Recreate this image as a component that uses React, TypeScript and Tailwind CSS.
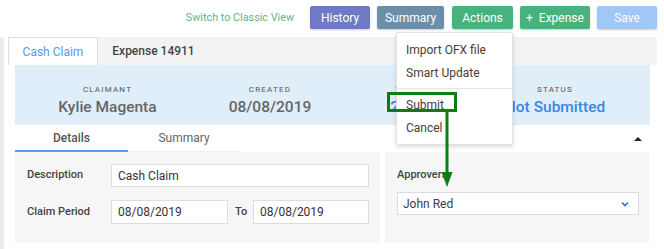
import React from "react";

function HeaderItem({
  label,
  value,
  valueClass,
}: {
  label: string;
  value: string;
  valueClass: string;
}) {
  return (
    <div className="flex flex-col items-center">
      <div className="text-[8px] tracking-[1.2px] text-[#555] leading-[10px]">{label}</div>
      <div className={`text-[15.5px] font-medium leading-[22px] mt-[1px] ${valueClass}`}>{value}</div>
    </div>
  );
}

function Button({ label, className }: { label: string; className: string }) {
  return (
    <button
      className={`h-[23px] rounded-[2px] text-white text-[12px] shadow-[0_1px_2px_rgba(0,0,0,0.2)] ${className}`}
    >
      {label}
    </button>
  );
}

export default function App() {
  return (
    <div
      className="relative w-[664px] h-[249px] overflow-hidden bg-white"
      style={{ fontFamily: "Roboto, 'Liberation Sans', sans-serif" }}
    >
      {/* top bar */}
      <div className="h-[37px] flex items-start justify-end pt-[6px] pr-[7px]">
        <span className="text-[10.8px] text-[#5cb883] mr-[16px] leading-[23px]">
          Switch to Classic View
        </span>
        <div className="flex gap-[7px]">
          <Button label="History" className="w-[60px] bg-[#7079c4]" />
          <Button label="Summary" className="w-[67px] bg-[#6b8fa9]" />
          <Button label="Actions" className="w-[61px] bg-[#48b27d] ml-[1px]" />
          <Button label="+  Expense" className="w-[70px] bg-[#48b27d] whitespace-pre" />
          <Button label="Save" className="w-[60px] bg-[#a0c7f5]" />
        </div>
      </div>

      <div className="flex h-[212px]">
        <div className="w-[4px] bg-[#ececec]" />
        <div className="ml-[4px] w-[649px]">
          {/* tabs */}
          <div className="h-[28px] bg-[#f3f3f3] flex items-end">
            <div className="w-[90px] h-[28px] bg-white border border-[#ddd] border-b-0 flex items-center justify-center text-[12px] text-[#5b96ec]">
              Cash Claim
            </div>
            <div className="w-[111px] flex items-center justify-center h-[28px] text-[12px] font-medium text-[#444]">
              Expense 14911
            </div>
          </div>

          <div className="px-[7px]">
            {/* summary header */}
            <div className="h-[60px] bg-[#dfeef9] grid grid-cols-[185px_140px_140px_150px] pt-[20px]">
              <HeaderItem label="CLAIMANT" value="Kylie Magenta" valueClass="text-[#666]" />
              <HeaderItem label="CREATED" value="08/08/2019" valueClass="text-[#666]" />
              <HeaderItem label="TOTAL" value="20.00" valueClass="text-[#3d7fd6]" />
              <HeaderItem label="STATUS" value="Not Submitted" valueClass="text-[#3d86e6]" />
            </div>

            {/* sub tabs */}
            <div className="h-[27px] flex items-end justify-between">
              <div className="flex">
                <div className="w-[113px] h-[27px] border-b-[2px] border-[#5b9be8] flex items-center justify-center text-[12px] font-medium text-[#555]">
                  Details
                </div>
                <div className="w-[112px] h-[27px] border-b border-[#eee] flex items-center justify-center text-[12px] text-[#666]">
                  Summary
                </div>
              </div>
              <div className="self-center mr-[8px] w-0 h-0 border-l-[4px] border-r-[4px] border-b-[4px] border-l-transparent border-r-transparent border-b-[#222]" />
            </div>

            {/* panels */}
            <div className="flex gap-[5px] h-[91px]">
              <div className="w-[365px] bg-[#f6f6f6] pl-[12px] pt-[12px]">
                <div className="flex items-center h-[23px]">
                  <div className="w-[84px] text-[11px] font-medium text-[#444]">Description</div>
                  <div className="w-[258px] h-[23px] bg-white border border-[#ddd] flex items-center pl-[6px] text-[12px] text-[#333]">
                    Cash Claim
                  </div>
                </div>
                <div className="flex items-center h-[24px] mt-[13px]">
                  <div className="w-[84px] text-[11px] font-medium text-[#444]">Claim Period</div>
                  <div className="w-[117px] h-[24px] bg-white border border-[#ddd] flex items-center pl-[6px] text-[12px] text-[#333]">
                    08/08/2019
                  </div>
                  <div className="w-[25px] pl-[7px] text-[11px] font-medium text-[#444]">To</div>
                  <div className="w-[116px] h-[24px] bg-white border border-[#ddd] flex items-center pl-[6px] text-[12px] text-[#333]">
                    08/08/2019
                  </div>
                </div>
              </div>
              <div className="w-[264px] bg-[#f6f6f6] pl-[12px] pt-[16px]">
                <div className="text-[11px] font-medium text-[#444] leading-[14px]">Approvers</div>
                <div className="mt-[10px] w-[242px] h-[23px] bg-white border border-[#ddd] flex items-center justify-between pl-[5px] pr-[9px] text-[12px] text-[#3c3c58]">
                  John Red
                  <svg width="8" height="6" viewBox="0 0 8 6">
                    <path d="M1 1.5 L4 4.5 L7 1.5" fill="none" stroke="#3b6fd8" strokeWidth="1.6" />
                  </svg>
                </div>
              </div>
            </div>
          </div>
        </div>
      </div>

      {/* dropdown menu */}
      <div className="absolute left-[396px] top-[32px] w-[117px] bg-white border border-[#e2e2e2] rounded-[2px] shadow-[0_2px_4px_rgba(0,0,0,0.15)] py-[5px] text-[12px] text-[#4a3d33]">
        <div className="h-[23px] flex items-center pl-[9px]">Import OFX file</div>
        <div className="h-[23px] flex items-center pl-[9px]">Smart Update</div>
        <div className="my-[4px] border-t border-[#e4e4e4]" />
        <div className="h-[23px] flex items-center pl-[9px]">Submit</div>
        <div className="h-[23px] flex items-center pl-[9px]">Cancel</div>
      </div>

      {/* annotation */}
      <div className="absolute left-[387px] top-[92px] w-[70px] h-[20px] border-[3px] border-[#0b7d12]" />
      <svg className="absolute left-[440px] top-[112px]" width="14" height="76" viewBox="0 0 14 76">
        <line x1="7" y1="0" x2="7" y2="62" stroke="#0b7d12" strokeWidth="3" />
        <polygon points="1.5,60 12.5,60 7,75" fill="#0b7d12" />
      </svg>
    </div>
  );
}
